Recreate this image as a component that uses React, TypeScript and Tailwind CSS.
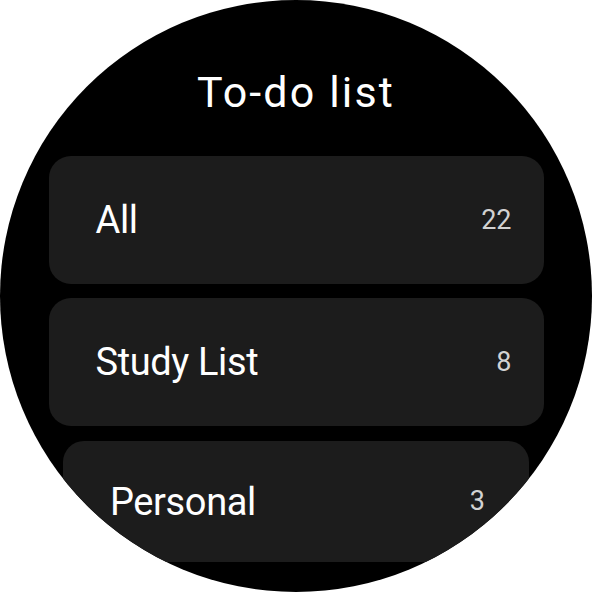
import React from "react";

type Item = { label: string; count: number };

const items: Item[] = [
  { label: "All", count: 22 },
  { label: "Study List", count: 8 },
];

export default function App() {
  return (
    <div
      className="w-[592px] h-[592px] bg-white"
      style={{ fontFamily: "Roboto, 'Noto Sans', sans-serif" }}
    >
      <div className="w-[592px] h-[592px] rounded-full bg-black overflow-hidden flex flex-col items-center">
        <h1 className="mt-[71px] text-[43px] leading-none font-normal text-white tracking-[0.05em]">
          To-do list
        </h1>
        <div className="mt-[42px] flex flex-col items-center gap-[14px]">
          {items.map((it) => (
            <div
              key={it.label}
              className="w-[495px] h-[128px] rounded-[22px] bg-[#1c1c1c] flex items-center justify-between pl-[47px] pr-[32px]"
            >
              <span className="text-[38px] leading-none text-white tracking-[-0.01em]">
                {it.label}
              </span>
              <span className="text-[27px] leading-none text-[#d2d2d2]">
                {it.count}
              </span>
            </div>
          ))}
          <div className="mt-px w-[466px] h-[121px] rounded-[21px] bg-[#1c1c1c] flex items-center justify-between pl-[47px] pr-[44px]">
            <span className="text-[38px] leading-none text-white tracking-[-0.01em]">
              Personal
            </span>
            <span className="text-[27px] leading-none text-[#d2d2d2]">3</span>
          </div>
        </div>
      </div>
    </div>
  );
}
